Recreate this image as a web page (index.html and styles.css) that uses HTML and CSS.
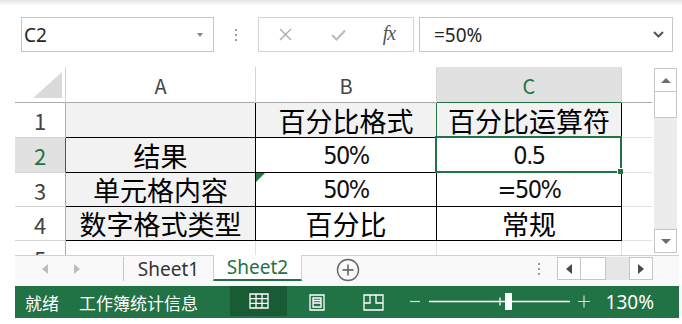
FILE: index.html
```html
<!DOCTYPE html>
<html lang="zh-CN">
<head>
<meta charset="utf-8">
<link rel="stylesheet" href="styles.css">
</head>
<body>
<div class="shade"></div>
<div class="fbar">
  <div class="namebox"><span class="nb-text">C2</span><span class="nb-arrow"></span></div>
  <div class="vdots"><i></i><i></i><i></i></div>
  <div class="fbtns">
    <span class="fb"><svg width="13" height="13" viewBox="0 0 13 13"><path d="M1 1 L12 12 M12 1 L1 12" stroke="#a9a9a9" stroke-width="1.3" fill="none"/></svg></span>
    <span class="fb"><svg width="15" height="12" viewBox="0 0 15 12"><path d="M1 6 L5.5 10.5 L14 1.5" stroke="#bdbdbd" stroke-width="2.2" fill="none"/></svg></span>
    <span class="fb fx">fx</span>
  </div>
  <div class="formula"><span class="ftext">=50%</span><svg class="chev" width="11" height="7" viewBox="0 0 11 7"><path d="M1 1 L5.5 5.5 L10 1" stroke="#555" stroke-width="2" fill="none"/></svg></div>
</div>

<div class="sheet">
  <div class="grid">
    <div class="corner"><svg width="50" height="35" viewBox="0 0 50 35"><polygon points="18,31 47,31 47,5" fill="#dadada"/></svg></div>
    <div class="ch">A</div>
    <div class="ch">B</div>
    <div class="ch csel">C</div>
    <div class="ch cd"></div>

    <div class="rh">1</div>
    <div class="c t fill"></div>
    <div class="c t fill bsel">百分比格式</div>
    <div class="c t fill">百分比运算符</div>
    <div class="c d"></div>

    <div class="rh rsel">2</div>
    <div class="c t fill">结果</div>
    <div class="c t num">50%</div>
    <div class="c t num active">0.5</div>
    <div class="c d"></div>

    <div class="rh">3</div>
    <div class="c t fill">单元格内容</div>
    <div class="c t num warn">50%</div>
    <div class="c t num">=50%</div>
    <div class="c d"></div>

    <div class="rh">4</div>
    <div class="c t fill">数字格式类型</div>
    <div class="c t">百分比</div>
    <div class="c t">常规</div>
    <div class="c d"></div>

    <div class="rh">5</div>
    <div class="c"></div>
    <div class="c"></div>
    <div class="c"></div>
    <div class="c d"></div>
  </div>
  <div class="vscroll">
    <div class="sbtn"><span class="tri-up"></span></div>
    <div class="vthumb"></div>
    <div class="vtrack"></div>
    <div class="sbtn"><span class="tri-down"></span></div>
  </div>
</div>

<div class="tabs">
  <div class="nav"><span class="tri-left"></span><span class="tri-right"></span></div>
  <div class="tab">Sheet1</div>
  <div class="tab active-tab">Sheet2</div>
  <div class="addsheet"><svg width="24" height="24" viewBox="0 0 24 24"><circle cx="12" cy="12" r="10.5" stroke="#666" stroke-width="1.4" fill="none"/><path d="M12 6.5 V17.5 M6.5 12 H17.5" stroke="#555" stroke-width="1.4"/></svg></div>
  <div class="spacer"></div>
  <div class="vdots hdots"><i></i><i></i><i></i></div>
  <div class="hscroll">
    <div class="hbtn"><span class="tri-left dark"></span></div>
    <div class="hthumb"></div>
    <div class="htrack"></div>
    <div class="hbtn"><span class="tri-right dark"></span></div>
  </div>
</div>

<div class="status">
  <div class="st1">就绪</div>
  <div class="st2">工作簿统计信息</div>
  <div class="viewbtn on"><svg width="20" height="16" viewBox="0 0 20 16"><path d="M1 1 H19 V15 H1 Z M7 1 V15 M13 1 V15 M1 5.7 H19 M1 10.3 H19" stroke="#fff" stroke-width="1.3" fill="none"/></svg></div>
  <div class="viewbtn pl"><svg width="16" height="17" viewBox="0 0 16 17"><path d="M1 1 H15 V16 H1 Z M4 4 H12 V13 H4 Z M4 6.5 H12 M4 9 H12" stroke="#fff" stroke-width="1.3" fill="none"/></svg></div>
  <div class="viewbtn pb"><svg width="21" height="17" viewBox="0 0 21 17"><path d="M1 1 H20 V16 H1 Z M1 1 V9 H7 V1 M7 1 V9 M13 1 V9 H20" stroke="#fff" stroke-width="1.3" fill="none"/></svg></div>
  <svg class="zoomctl" width="201" height="32" viewBox="0 0 201 32"><path d="M11 15.5 H21" stroke="#cfe3d6" stroke-width="1.2"/><path d="M30 15.5 H171" stroke="#fff" stroke-width="1.6"/><path d="M101 11.5 V19.5" stroke="#fff" stroke-width="1.3"/><rect x="106" y="7" width="7" height="17" fill="#fff"/><path d="M179 15.5 H191 M185 9.5 V21.5" stroke="#cfe3d6" stroke-width="1.2"/></svg>
  <div class="zpct">130%</div>
</div>
</body>
</html>
```
FILE: styles.css
```css
html, body { margin: 0; padding: 0; }
body {
  width: 682px;
  height: 324px;
  overflow: hidden;
  background: #fff;
  font-family: "Noto Sans", "Noto Sans CJK SC", sans-serif;
}

.shade {
  height: 5px;
  background: linear-gradient(#e4e4e4, #fbfbfb);
}

/* formula bar */
.fbar {
  display: flex;
  height: 35px;
  margin-top: 12px;
  padding-left: 21px;
}
.namebox {
  box-sizing: border-box;
  width: 193px;
  border: 1px solid #c6c6c6;
  display: flex;
  align-items: center;
  justify-content: space-between;
  padding: 0 10px 0 2px;
}
.nb-text { font-size: 19px; color: #262626; }
.nb-arrow {
  width: 0; height: 0;
  border-left: 3.5px solid transparent;
  border-right: 3.5px solid transparent;
  border-top: 4px solid #858585;
}
.vdots {
  width: 44px;
  display: flex;
  flex-direction: column;
  align-items: center;
  justify-content: center;
  gap: 3px;
}
.vdots i {
  display: block;
  width: 2px;
  height: 2px;
  background: #9a9a9a;
}
.fbtns {
  box-sizing: border-box;
  width: 156px;
  border: 1px solid #d4d4d4;
  display: grid;
  grid-template-columns: 53px 52px 50px;
  align-items: center;
  justify-items: center;
}
.fb { display: flex; align-items: center; justify-content: center; }
.fx {
  font-family: "Liberation Serif", serif;
  font-style: italic;
  font-size: 20px;
  color: #555;
  letter-spacing: -1px;
  margin-top: -2px;
}
.formula {
  box-sizing: border-box;
  width: 254px;
  margin-left: 5px;
  border: 1px solid #c6c6c6;
  display: flex;
  align-items: center;
  justify-content: space-between;
  padding: 0 8px 0 14px;
}
.ftext { font-size: 19px; color: #262626; }

/* sheet */
.sheet {
  display: flex;
  margin-top: 15px;
  padding-left: 15px;
  height: 188px;
}
.grid {
  display: grid;
  grid-template-columns: 51px 190px 181px 185px 30px;
  grid-template-rows: 36px 35px 35px 34px 34px 34px;
  height: 188px;
  overflow: hidden;
  font-family: "Noto Sans CJK SC", sans-serif;
}
.grid > div {
  box-sizing: border-box;
  border-right: 1px solid #e1e1e1;
  border-bottom: 1px solid #e1e1e1;
  display: flex;
  align-items: center;
  justify-content: center;
}
.corner { border-right-color: #d5d5d5 !important; border-bottom-color: #ababab !important; }
.ch {
  font-size: 20px;
  color: #444;
  border-right-color: #d5d5d5 !important;
  border-bottom-color: #ababab !important;
  padding-top: 1px;
}
.ch.cd { border-right: none !important; }
.csel {
  background: #e1e1e1;
  color: #217346;
  border-bottom-color: #217346 !important;
}
.rh {
  font-size: 22px;
  color: #444;
  border-right-color: #ababab !important;
  border-bottom-color: #d5d5d5 !important;
}
.rsel {
  background: #e1e1e1;
  color: #217346;
  border-right-color: #217346 !important;
}
.c {
  font-size: 27px;
  color: #000;
  line-height: 1;
}
.c.num {
  font-family: "DejaVu Sans", sans-serif;
  font-stretch: condensed;
  font-size: 25px;
  letter-spacing: -1.5px;
  color: #111;
}
.c.d { border-right: none !important; }
.t {
  border-right-color: #000 !important;
  border-bottom-color: #000 !important;
}
.fill { background: #f2f2f2; }
.bsel { border-right-color: #217346 !important; }
.active { position: relative; }
.active::before {
  content: "";
  position: absolute;
  left: -2px; top: -2px; right: -1px; bottom: -1px;
  border: 2px solid #217346;
}
.active::after {
  content: "";
  position: absolute;
  right: -2px; bottom: -2px;
  width: 5px; height: 5px;
  background: #217346;
  border-left: 1px solid #fff;
  border-top: 1px solid #fff;
}
.warn { position: relative; }
.warn::before {
  content: "";
  position: absolute;
  left: 0; top: 0;
  width: 0; height: 0;
  border-top: 9px solid #1f7a3f;
  border-right: 9px solid transparent;
}

/* vertical scrollbar */
.vscroll {
  margin-left: 2px;
  margin-top: 1px;
  width: 23px;
  height: 185px;
  display: flex;
  flex-direction: column;
  background: #ececec;
}
.sbtn {
  box-sizing: border-box;
  height: 24px;
  border: 1px solid #c6c6c6;
  background: #fff;
  display: flex;
  align-items: center;
  justify-content: center;
}
.vthumb {
  box-sizing: border-box;
  height: 26px;
  border: 1px solid #c6c6c6;
  border-top: none;
  background: #fff;
}
.vtrack { flex: 1; }
.tri-up, .tri-down { width: 0; height: 0; border-left: 5px solid transparent; border-right: 5px solid transparent; }
.tri-up { border-bottom: 5px solid #6d6d6d; }
.tri-down { border-top: 5px solid #6d6d6d; }

/* sheet tabs */
.tabs {
  display: flex;
  align-items: flex-start;
  box-sizing: border-box;
  height: 31px;
  margin-left: 15px;
  width: 664px;
  border-top: 1px solid #d0d0d0;
  background: #f9f9f9;
}
.nav {
  box-sizing: border-box;
  width: 109px;
  height: 24px;
  margin-top: 1px;
  display: flex;
  align-items: center;
  padding-left: 27px;
  gap: 26px;
  border-right: 1px solid #c6c6c6;
}
.tri-left, .tri-right { width: 0; height: 0; border-top: 5px solid transparent; border-bottom: 5px solid transparent; }
.tri-left { border-right: 6px solid #bdbdbd; }
.tri-right { border-left: 6px solid #bdbdbd; }
.tri-left.dark { border-right-color: #4a4a4a; }
.tri-right.dark { border-left-color: #4a4a4a; }
.tab {
  box-sizing: border-box;
  height: 25px;
  width: 89px;
  display: flex;
  align-items: center;
  justify-content: center;
  font-size: 19px;
  color: #333;
}
.active-tab {
  margin-top: -1px;
  height: 26px;
  background: #fff;
  color: #217346;
  border-left: 1px solid #d0d0d0;
  border-right: 1px solid #d0d0d0;
  border-bottom: 2px solid #217346;
}
.addsheet {
  margin-left: 34px;
  margin-top: 2px;
  display: flex;
}
.spacer { flex: 1; }
.hdots { width: 20px; height: 26px; margin-right: 8px; }
.hscroll {
  display: flex;
  height: 23px;
  margin-top: 1px;
  margin-right: 26px;
  background: #e6e6e6;
}
.hbtn {
  box-sizing: border-box;
  width: 24px;
  height: 23px;
  border: 1px solid #c6c6c6;
  background: #fff;
  display: flex;
  align-items: center;
  justify-content: center;
}
.hthumb {
  box-sizing: border-box;
  width: 25px;
  border: 1px solid #c6c6c6;
  border-left: none;
  background: #fff;
}
.htrack { width: 23px; }

/* status bar */
.status {
  display: flex;
  align-items: center;
  height: 32px;
  margin-left: 15px;
  width: 664px;
  background: #217346;
  color: #fff;
  font-family: "Noto Sans CJK SC", sans-serif;
  font-size: 17px;
}
.st1 { box-sizing: border-box; width: 64px; padding-left: 10px; }
.st2 { width: 151px; }
.viewbtn {
  height: 32px;
  display: flex;
  align-items: center;
  justify-content: center;
}
.viewbtn.on { width: 57px; height: 30px; align-self: flex-start; background: #185b35; }
.viewbtn.pl { width: 60px; }
.viewbtn.pb { width: 52px; }
.zoomctl { display: block; }
.zpct {
  width: 54px;
  text-align: right;
  font-family: "Noto Sans", sans-serif;
  font-size: 19px;
}
```
